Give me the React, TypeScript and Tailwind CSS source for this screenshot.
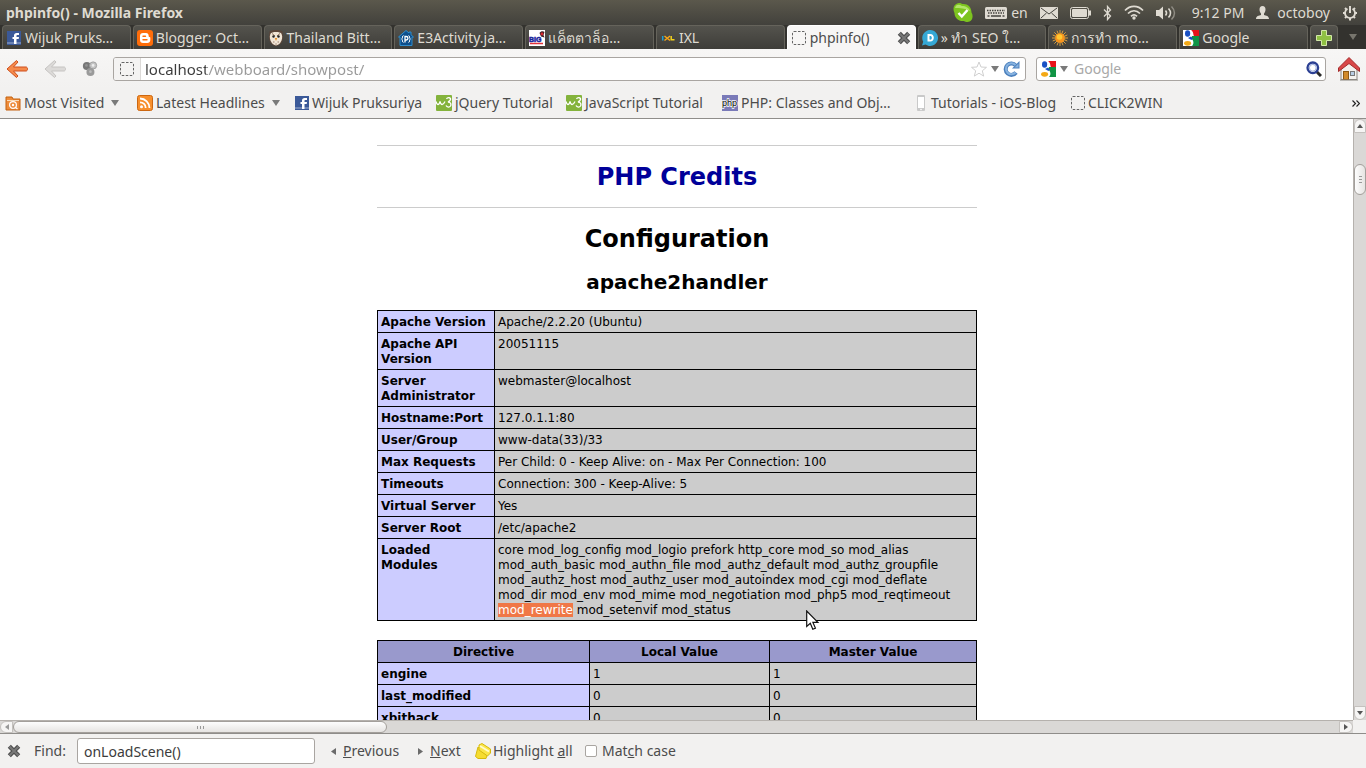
import type { ReactNode } from "react";

interface Tab {
  title: string;
  icon: ReactNode;
  active?: boolean;
}

interface Bookmark {
  title: string;
  icon: ReactNode;
  width: string;
  folder?: boolean;
}

function FacebookIcon() {
  return (
    <svg width="14" height="14" viewBox="0 0 14 14" className="shrink-0">
      <rect width="14" height="14" fill="#3b5998" />
      <rect y="11" width="14" height="2" fill="#6d84b4" />
      <path d="M7 13V8H5.5V6H7V4.6C7 3 8 2 9.600 2H12v2h-1.500c-.8 0-1 .3-1 1v1H12l-.3 2H9.500v5z" fill="#fff" />
    </svg>
  );
}

function BloggerIcon() {
  return (
    <svg width="16" height="16" viewBox="0 0 16 16" className="shrink-0">
      <rect width="16" height="16" rx="3" fill="#ff6d0a" />
      <path d="M6 3h3c1.700 0 2.700 1.200 2.700 3 0 .8.200 1 .8 1 .5 0 .8.300.8.8V10c0 1.800-1.200 3-3 3H6c-1.800 0-3-1.200-3-3V6c0-1.800 1.200-3 3-3z" fill="#fff" />
      <path d="M6 6.200h2.500M6 9.800h4" stroke="#ff6d0a" strokeWidth="1.400" strokeLinecap="round" />
    </svg>
  );
}

function OwlIcon() {
  return (
    <svg width="16" height="16" viewBox="0 0 16 16" className="shrink-0">
      <path d="M1.500 1.500c3-2 10-2 13 0l.5 5.500c0 5-2.500 8.500-7 9-4.500-.5-7-4-7-9z" fill="#5b463a" />
      <path d="M3 3c2-1.500 8-1.500 10 0 1.500 2 1.500 5 .5 7.500-1 2.500-2.500 4.500-5.500 5-3-.5-4.500-2.500-5.500-5C1.500 8 1.500 5 3 3z" fill="#f0e5d6" />
      <path d="M4 3.500l3 2.500M12 3.500L9 6" stroke="#8b6d58" />
      <circle cx="5.500" cy="6.500" r="1.200" fill="#222" />
      <circle cx="10.500" cy="6.500" r="1.200" fill="#222" />
      <path d="M6.800 8h2.400L8 11z" fill="#e28a22" />
      <path d="M5 12h1.500M9.500 12H11M7.300 14h1.500" stroke="#9a7b66" />
    </svg>
  );
}

function PantipIcon() {
  return (
    <svg width="16" height="16" viewBox="0 0 16 16" className="shrink-0">
      <path d="M8 .5L.5 7H2v8.500h12V7h1.500L13 4.800V2h-2v1z" fill="#0d4f8c" stroke="#2f8ccb" />
      <path d="M5.500 5.500c-1.500 0-.5 3-2 3.500 1.500.5.500 3.500 2 3.500M10.500 5.500c1.500 0 .5 3 2 3.500-1.500.5-.5 3.500-2 3.500" stroke="#fff" fill="none" />
      <path d="M7 12.500V6.500h1.200a1.600 1.600 0 010 3.500H7" stroke="#fff" strokeWidth="1.300" fill="none" />
    </svg>
  );
}

function BigIcon() {
  return (
    <svg width="16" height="16" viewBox="0 0 16 16" className="shrink-0">
      <rect width="16" height="16" fill="#fff" />
      <path d="M10.500 3c1-2 4-2 5-1l-1 3 1 2.500-3.500-1z" fill="#432327" />
      <circle cx="13" cy="4" r="1.400" fill="#d8252c" />
      <text x="0" y="12" fontSize="7" fontWeight="bold" fontFamily="Liberation Sans, sans-serif" fill="#17259b" stroke="#17259b" strokeWidth=".5">BIG</text>
      <path d="M1 13.500h13" stroke="#e3323b" strokeWidth="1.500" />
    </svg>
  );
}

function IxlIcon() {
  return (
    <svg width="16" height="16" viewBox="0 0 16 16" className="shrink-0">
      <path d="M2.700 6v4.500" stroke="#1da0d8" strokeWidth="1.500" />
      <path d="M4.500 6l5.500 4.500M10 6l-5.500 4.500" stroke="#f5a51a" strokeWidth="1.500" />
      <path d="M11.200 6v3.800H14.500" stroke="#f2d21c" strokeWidth="1.500" fill="none" />
    </svg>
  );
}

function BlankPageIcon() {
  return (
    <svg width="14" height="14" viewBox="0 0 14 14" className="shrink-0">
      <rect x=".5" y=".5" width="13" height="13" rx="1.500" fill="none" stroke="#666" strokeDasharray="2.500 1.500" />
    </svg>
  );
}

function DisqusIcon() {
  return (
    <svg width="16" height="16" viewBox="0 0 16 16" className="shrink-0">
      <path d="M8 0a8 8 0 11-4.500 14.600L0 15.500l1.200-3.700A8 8 0 018 0z" fill="#35a8d5" />
      <path d="M5.500 4h2.700c2.300 0 3.600 1.500 3.600 3.800s-1.300 3.700-3.600 3.700H5.500zM7.500 6v3.600c1.700.2 2.300-.4 2.300-1.800S9.200 5.900 7.500 6z" fill="#fff" />
    </svg>
  );
}

function SunIcon() {
  return (
    <svg width="16" height="16" viewBox="0 0 16 16" className="shrink-0">
      <path d="M8 0v16M0 8h16M2.300 2.300l11.400 11.400M13.700 2.300L2.300 13.700M5 .7l6 14.600M11 .7L5 15.300M.7 5l14.600 6M.7 11l14.600-6" stroke="#d9a040" />
      <circle cx="8" cy="8" r="4.800" fill="#f7941d" />
      <circle cx="7.500" cy="7" r="2.800" fill="#ffc832" />
    </svg>
  );
}

function GoogleIcon() {
  return (
    <svg width="16" height="16" viewBox="0 0 16 16" className="shrink-0">
      <rect width="16" height="16" fill="#fff" />
      <path d="M8 0h8v6h-5C10 5 11 2 8 0z" fill="#e8141a" />
      <path d="M9 6h7v10H9c2-2 2-5-.5-7.500z" fill="#109445" />
      <ellipse cx="4.600" cy="3.500" rx="2.600" ry="3.200" fill="#1950c4" />
      <path d="M5 8l3-1.500 2 2L8.500 10z" fill="#1950c4" />
      <ellipse cx="4.600" cy="13.300" rx="3.500" ry="2.400" fill="#f3a916" />
    </svg>
  );
}

function W3Icon() {
  return (
    <svg width="16" height="16" viewBox="0 0 16 16" className="shrink-0">
      <rect width="16" height="16" rx="1" fill="#84b33c" />
      <path d="M0 6.500c1 4 3 4 4 0 1 4 3 4 5 0" stroke="#fff" strokeWidth="1.300" fill="none" />
      <path d="M10.500 4c1-2 4.500-1.500 4 .5-.3 1.500-1.500 2-2.500 2.500 2.500 0 3.500 2 2.500 4-1 1.500-3.500 1.500-4.500-.5" stroke="#fff" strokeWidth="1.300" fill="none" />
    </svg>
  );
}

function PhpIcon() {
  return (
    <svg width="16" height="16" viewBox="0 0 16 16" className="shrink-0">
      <rect width="16" height="16" fill="#7a7ab8" />
      <text x="0" y="11" fontSize="9" fontFamily="Liberation Sans, sans-serif" fill="#000" stroke="#fff" strokeWidth="1.500" paintOrder="stroke">php</text>
    </svg>
  );
}

function FolderFeedIcon() {
  return (
    <svg width="16" height="16" viewBox="0 0 16 16" className="shrink-0">
      <path d="M1 15V2h6l1 2h7v11z" fill="#ee8c3a" stroke="#c4610f" />
      <path d="M2 5.500h12" stroke="#fbdcb8" />
      <circle cx="8" cy="10" r="3.400" fill="none" stroke="#fff" strokeWidth="1.200" />
      <circle cx="8" cy="10" r="1.200" fill="#fff" />
      <path d="M10.500 12.500L12.500 14" stroke="#fff" strokeWidth="1.300" />
    </svg>
  );
}

function FeedIcon() {
  return (
    <svg width="16" height="16" viewBox="0 0 16 16" className="shrink-0">
      <rect x=".5" y=".5" width="15" height="15" rx="2" fill="#f78f2c" stroke="#cc6711" />
      <circle cx="4.500" cy="11.700" r="1.500" fill="#fff" />
      <path d="M3 7.300c3.300 0 5.700 2.400 5.700 5.700M3 3.500c5.300 0 9.500 4.200 9.500 9.500" stroke="#fff" strokeWidth="1.800" fill="none" />
    </svg>
  );
}

function PhoneIcon() {
  return (
    <svg width="14" height="16" viewBox="0 0 14 16" className="shrink-0">
      <rect x="3" width="8" height="16" rx="1" fill="#c9c9c9" />
      <rect x="4" y="2" width="6" height="11" fill="#fff" />
      <circle cx="7" cy="14.500" r=".8" fill="#fff" />
    </svg>
  );
}

function DownArrow({ color = "#7a7a7a" }: { color?: string }) {
  return (
    <svg width="8" height="6" viewBox="0 0 8 6" className="shrink-0">
      <path d="M0 0h8L4 6z" fill={color} />
    </svg>
  );
}

function CloseIcon() {
  return (
    <svg width="14" height="14" viewBox="0 0 14 14">
      <path d="M2.300 2.300l9.400 9.400M11.700 2.300l-9.400 9.400" stroke="#4e4e4e" strokeWidth="4.400" />
      <path d="M2.500 2.500l9 9M11.500 2.500l-9 9" stroke="#787878" strokeWidth="2" />
    </svg>
  );
}

function ArrowIcon({ fill, stroke }: { fill: string; stroke: string }) {
  return (
    <svg width="22" height="20" viewBox="0 0 22 20">
      <path d="M10.500 1.500L1 10l9.500 8.500 1.500-1.500-4.500-5H20c2 0 2-4 0-4H7.500l4.500-5z" fill={fill} stroke={stroke} strokeLinejoin="round" />
    </svg>
  );
}

const TABS: Tab[] = [
  { title: "Wijuk Pruks…", icon: <FacebookIcon /> },
  { title: "Blogger: Oct…", icon: <BloggerIcon /> },
  { title: "Thailand Bitt…", icon: <OwlIcon /> },
  { title: "E3Activity.ja…", icon: <PantipIcon /> },
  { title: "แค็ตตาล็อ…", icon: <BigIcon /> },
  { title: "IXL", icon: <IxlIcon /> },
  { title: "phpinfo()", icon: <BlankPageIcon />, active: true },
  { title: "» ทำ SEO ใ…", icon: <DisqusIcon /> },
  { title: "การทำ mo…", icon: <SunIcon /> },
  { title: "Google", icon: <GoogleIcon /> },
];

const BOOKMARKS: Bookmark[] = [
  { title: "Most Visited", icon: <FolderFeedIcon />, width: "w-[132px]", folder: true },
  { title: "Latest Headlines", icon: <FeedIcon />, width: "w-[158px]", folder: true },
  { title: "Wijuk Pruksuriya", icon: <FacebookIcon />, width: "w-[141px]" },
  { title: "jQuery Tutorial", icon: <W3Icon />, width: "w-[130px]" },
  { title: "JavaScript Tutorial", icon: <W3Icon />, width: "w-[156px]" },
  { title: "PHP: Classes and Obj…", icon: <PhpIcon />, width: "w-[192px]" },
  { title: "Tutorials - iOS-Blog", icon: <PhoneIcon />, width: "w-[157px]" },
  { title: "CLICK2WIN", icon: <BlankPageIcon />, width: "w-[110px]" },
];

const APACHE_INFO: [string, string][] = [
  ["Apache Version", "Apache/2.2.20 (Ubuntu)"],
  ["Apache API Version", "20051115"],
  ["Server Administrator", "webmaster@localhost"],
  ["Hostname:Port", "127.0.1.1:80"],
  ["User/Group", "www-data(33)/33"],
  ["Max Requests", "Per Child: 0 - Keep Alive: on - Max Per Connection: 100"],
  ["Timeouts", "Connection: 300 - Keep-Alive: 5"],
  ["Virtual Server", "Yes"],
  ["Server Root", "/etc/apache2"],
];

const DIRECTIVES: [string, string, string][] = [
  ["engine", "1", "1"],
  ["last_modified", "0", "0"],
  ["xbithack", "0", "0"],
];

function SystemPanel() {
  return (
    <header className="flex h-[25px] shrink-0 items-center justify-between bg-linear-to-b from-[#5b584c] to-[#42413c] pr-2 pl-1.5 text-[#dfdbd2]">
      <h1 className="text-sm font-bold">phpinfo() - Mozilla Firefox</h1>
      <div className="flex items-center gap-3">
        <svg width="20" height="20" viewBox="0 0 20 20">
          <path d="M6 0c1.500 0 2.500.5 3.500 1 5-.5 9 3 9 8.500 2.500 4 .5 9.500-4 9.500-1.500 0-2.500-.3-3.500-1C5.500 18.500 1.500 15 1.500 10-1 5 1.500.5 6 0z" fill="#7dc41f" />
          <path d="M2 5c1-4 4-4 7-2 4 0 7 2 8 5-5-3-10-3-15-3z" fill="#b2e36a" />
          <path d="M5.500 10l3.300 3.500L14.500 7" stroke="#fff" strokeWidth="2.500" fill="none" />
        </svg>
        <div className="flex items-center gap-1">
          <svg width="22" height="12" viewBox="0 0 22 12">
            <rect width="22" height="12" rx="1.500" fill="#dfdbd2" />
            <path d="M2 3.500h18M3 6h16" stroke="#45443f" strokeWidth="1.500" strokeDasharray="1.500 1" />
            <path d="M2.500 9h2M6 9h10M17.500 9h2" stroke="#45443f" strokeWidth="1.500" />
          </svg>
          <span className="text-sm">en</span>
        </div>
        <svg width="18" height="12" viewBox="0 0 18 12">
          <rect width="18" height="12" rx="1" fill="#dfdbd2" />
          <path d="M1 1l8 6 8-6M1 11l5.500-5M17 11l-5.500-5" stroke="#45443f" fill="none" />
        </svg>
        <svg width="21" height="12" viewBox="0 0 21 12">
          <rect x=".5" y=".5" width="18" height="11" rx="2" fill="none" stroke="#dfdbd2" />
          <rect x="2" y="2" width="15" height="8" rx="1" fill="#dfdbd2" />
          <rect x="19" y="3.500" width="2" height="5" fill="#dfdbd2" />
        </svg>
        <svg width="9" height="16" viewBox="0 0 9 16">
          <path d="M1 4.500l6.500 6.500L4.500 14.500v-13L7.500 5 1 11.500" stroke="#dfdbd2" strokeWidth="1.300" fill="none" />
        </svg>
        <svg width="20" height="15" viewBox="0 0 20 15">
          <path d="M1 5.500c5-5.500 13-5.500 18 0M4 8.500c3.500-3.700 8.500-3.700 12 0M7 11.300c2-2 4-2 6 0" stroke="#dfdbd2" strokeWidth="1.700" fill="none" />
          <circle cx="10" cy="13" r="1.700" fill="#dfdbd2" />
        </svg>
        <svg width="20" height="16" viewBox="0 0 20 16">
          <path d="M0 5h3l4-3.500v13L3 11H0z" fill="#dfdbd2" />
          <path d="M9.500 5.500c1.300 1.500 1.300 3.500 0 5M12.500 3.500c2.700 3 2.700 6 0 9" stroke="#dfdbd2" strokeWidth="1.500" fill="none" />
          <path d="M15.500 1.500c4 4 4 9 0 13" stroke="#8f8c83" strokeWidth="1.500" fill="none" />
        </svg>
        <time className="ml-1 text-sm">9:12 PM</time>
        <div className="flex items-center gap-2">
          <svg width="13" height="13" viewBox="0 0 13 13">
            <path d="M6.500 0c2 0 3 1.500 3 3.500S8.500 7 8 7.500V9c2 .5 5 1 5 4H0c0-3 3-3.500 5-4V7.500C4.500 7 3.500 5.500 3.500 3.500S4.500 0 6.500 0z" fill="#dfdbd2" />
          </svg>
          <span className="text-sm">octoboy</span>
        </div>
        <svg width="16" height="16" viewBox="0 0 16 16">
          <path d="M5.500 3.700a5 5 0 105 0" stroke="#dfdbd2" strokeWidth="1.800" fill="none" />
          <path d="M8 1v7M1 8h2M13 8h2M3 3l1.300 1.300M13 3l-1.300 1.300M3 13l1.300-1.300M13 13l-1.300-1.300M8 13v2.500" stroke="#dfdbd2" strokeWidth="2" />
        </svg>
      </div>
    </header>
  );
}

function TabStrip() {
  return (
    <nav className="flex h-6 shrink-0 gap-0.5 bg-[#33322e] pl-0.5" aria-label="Tabs">
      {TABS.map((tab) =>
        tab.active ? (
          <div
            key={tab.title}
            className="flex max-w-[129px] min-w-0 flex-1 items-center rounded-t border border-b-0 border-white bg-[#f7f6f5] pr-1 pl-[3px] text-sm text-[#4c4c4c]"
          >
            <button type="button" className="flex flex-1 items-center gap-[3px]">
              <span className="flex size-4 shrink-0 items-center justify-center">{tab.icon}</span>
              {tab.title}
            </button>
            <button type="button" aria-label="Close tab">
              <CloseIcon />
            </button>
          </div>
        ) : (
          <button
            key={tab.title}
            type="button"
            className="flex max-w-[129px] min-w-0 flex-1 items-center gap-[3px] overflow-hidden rounded-t border border-b-0 border-[#65635b] bg-linear-to-b from-[#54534d] to-[#3e3d39] pl-[3px] text-sm whitespace-nowrap text-[#dfdbd2]"
          >
            <span className="flex size-4 shrink-0 items-center justify-center">{tab.icon}</span>
            {tab.title}
          </button>
        ),
      )}
      <button
        type="button"
        aria-label="New tab"
        className="flex w-7 items-center justify-center rounded-t border border-b-0 border-[#65635b] bg-linear-to-b from-[#54534d] to-[#3e3d39]"
      >
        <svg width="16" height="16" viewBox="0 0 16 16">
          <path d="M5.500.5h5v5h5v5h-5v5h-5v-5h-5v-5h5z" fill="#8fc043" stroke="#d2e8a8" />
        </svg>
      </button>
      <button type="button" aria-label="List all tabs" className="flex w-[26px] items-center justify-center">
        <DownArrow color="#77756d" />
      </button>
    </nav>
  );
}

function NavigationBar() {
  return (
    <div className="flex h-[39px] shrink-0 items-center bg-linear-to-b from-[#f7f6f5] to-[#f2f1f0] pr-1.5 pl-1.5">
      <div className="flex w-[107px] items-center gap-4">
        <button type="button" aria-label="Back">
          <ArrowIcon fill="#f58a4b" stroke="#cf4f1c" />
        </button>
        <button type="button" aria-label="Forward">
          <ArrowIcon fill="#dcdad8" stroke="#c6c4c2" />
        </button>
        <svg width="16" height="16" viewBox="0 0 18 18">
          <circle cx="5.500" cy="5.500" r="4.500" fill="#777" />
          <circle cx="12.500" cy="5" r="4" fill="#c4c4c4" stroke="#999" />
          <circle cx="9.500" cy="12.500" r="4.500" fill="#9a9a9a" />
          <circle cx="5" cy="5" r="1.500" fill="#939393" />
          <circle cx="12.500" cy="5" r="1.500" fill="#eee" />
          <circle cx="9.500" cy="12" r="1.500" fill="#bbb" />
        </svg>
      </div>
      <div className="flex h-6 flex-1 items-center overflow-hidden rounded-[3px] border border-[#a9a5a1] bg-white">
        <div className="flex h-full w-[27px] items-center justify-center border-r border-[#dcdad8] bg-[#f4f3f2]">
          <BlankPageIcon />
        </div>
        <input
          aria-label="Location"
          defaultValue="localhost/webboard/showpost/"
          className="min-w-0 flex-1 bg-linear-to-r from-[#3c3c3c] from-[65px] to-[#999999] to-[65px] bg-clip-text pl-1 text-[15px] leading-5 text-transparent outline-none"
        />
        <div className="flex items-center gap-1 pr-1">
          <button type="button" aria-label="Bookmark this page">
            <svg width="16" height="16" viewBox="0 0 16 16">
              <path d="M8 1l2 5 5.500.3-4.200 3.500 1.400 5.300L8 12.200l-4.700 2.900 1.400-5.300L.5 6.300 6 6z" fill="#fff" stroke="#cfcfcf" />
            </svg>
          </button>
          <button type="button" aria-label="Show history">
            <DownArrow />
          </button>
          <button type="button" aria-label="Reload">
            <svg width="18" height="16" viewBox="0 0 18 16">
              <path d="M13 11.500a5.700 5.700 0 11-.3-7" stroke="#4c80bd" strokeWidth="4" fill="none" />
              <path d="M16.500 0v7.500H9z" fill="#4c80bd" />
              <path d="M12.500 11.500a5.500 5.500 0 110-7.500" stroke="#86b2e0" strokeWidth="2" fill="none" />
              <path d="M15.500 2.500v4h-4z" fill="#86b2e0" />
            </svg>
          </button>
        </div>
      </div>
      <div className="ml-2.5 flex h-6 w-[290px] items-center gap-1 rounded-[3px] border border-[#a9a5a1] bg-white px-[3px]">
        <GoogleIcon />
        <button type="button" aria-label="Choose search engine">
          <DownArrow />
        </button>
        <input
          aria-label="Search"
          placeholder="Google"
          className="min-w-0 flex-1 pl-0.5 text-sm text-[#3c3c3c] outline-none placeholder:text-[#a8a8a8]"
        />
        <button type="button" aria-label="Submit search">
          <svg width="16" height="16" viewBox="0 0 16 16">
            <path d="M10.500 10.500l4.500 4.500" stroke="#2a2a2a" strokeWidth="3" />
            <circle cx="6.800" cy="6.800" r="5.300" fill="#e8eefb" stroke="#2b3f93" strokeWidth="2.300" />
            <circle cx="6.800" cy="6.800" r="3.400" fill="#fff" stroke="#9eaedb" />
          </svg>
        </button>
      </div>
      <button type="button" aria-label="Home" className="ml-3">
        <svg width="22" height="24" viewBox="0 0 22 24">
          <path d="M3 11l8-8 8 8v11.500H3z" fill="#f4f2ee" stroke="#8a8680" />
          <path d="M11 .5L.5 11v3.500L11 6.500l10.500 8V11z" fill="#d94848" stroke="#a32a2a" strokeLinejoin="round" />
          <rect x="5.500" y="14.500" width="5" height="8" fill="#d18a2a" stroke="#8f5a12" />
          <rect x="12.500" y="14.500" width="4" height="4" fill="#b7cde4" stroke="#777" />
          <path d="M2 23h18" stroke="#8a8680" />
        </svg>
      </button>
    </div>
  );
}

function BookmarksBar() {
  return (
    <nav className="flex h-[31px] shrink-0 items-center border-b border-[#8f8d8a] bg-[#f2f1f0] pr-1.5 pl-[5px] text-sm text-[#4c4c4c]">
      {BOOKMARKS.map((b) => (
        <a key={b.title} href="#" className={`flex shrink-0 items-center gap-[3px] whitespace-nowrap ${b.width}`}>
          {b.icon}
          {b.title}
          {b.folder && (
            <span className="ml-1">
              <DownArrow />
            </span>
          )}
        </a>
      ))}
      <button type="button" aria-label="More bookmarks" className="ml-auto">
        <svg width="8" height="7" viewBox="0 0 8 7">
          <path d="M.5.500l3 3-3 3M4.500.500l3 3-3 3" stroke="#222" strokeWidth="1.200" fill="none" />
        </svg>
      </button>
    </nav>
  );
}

function PhpInfoPage() {
  return (
    <main className="mx-auto w-[600px] max-w-full pt-[26px] text-xs leading-[15px] text-black [font-family:'DejaVu_Sans',sans-serif]">
      <hr className="border-[#cccccc]" />
      <h1 className="mt-[17px] mb-4 text-center text-2xl leading-7 font-bold text-[#000099]">
        <a href="#">PHP Credits</a>
      </h1>
      <hr className="border-[#cccccc]" />
      <h1 className="mt-[17px] mb-[15px] text-center text-2xl leading-7 font-bold">Configuration</h1>
      <h2 className="mb-3.5 text-center text-xl leading-7 font-bold">apache2handler</h2>

      <table className="w-full table-fixed border-collapse">
        <colgroup>
          <col className="w-[117px]" />
          <col />
        </colgroup>
        <tbody>
          {APACHE_INFO.map(([name, value]) => (
            <tr key={name}>
              <th scope="row" className="border border-black bg-[#ccccff] px-[3px] pt-1 pb-0.5 text-left align-top">
                {name}
              </th>
              <td className="border border-black bg-[#cccccc] px-[3px] pt-1 pb-0.5 align-top">{value}</td>
            </tr>
          ))}
          <tr>
            <th scope="row" className="border border-black bg-[#ccccff] px-[3px] pt-1 pb-0.5 text-left align-top">
              Loaded Modules
            </th>
            <td className="border border-black bg-[#cccccc] px-[3px] pt-1 pb-0.5 align-top">
              core mod_log_config mod_logio prefork http_core mod_so mod_alias mod_auth_basic mod_authn_file
              mod_authz_default mod_authz_groupfile mod_authz_host mod_authz_user mod_autoindex mod_cgi
              mod_deflate mod_dir mod_env mod_mime mod_negotiation mod_php5 mod_reqtimeout{" "}
              <mark className="bg-[#f07746] text-white">mod_rewrite</mark> mod_setenvif mod_status
            </td>
          </tr>
        </tbody>
      </table>

      <table className="mt-[19px] w-full table-fixed border-collapse">
        <colgroup>
          <col className="w-[212px]" />
          <col className="w-[180px]" />
          <col />
        </colgroup>
        <thead>
          <tr className="bg-[#9999cc]">
            <th scope="col" className="border border-black px-[3px] pt-1 pb-0.5">Directive</th>
            <th scope="col" className="border border-black px-[3px] pt-1 pb-0.5">Local Value</th>
            <th scope="col" className="border border-black px-[3px] pt-1 pb-0.5">Master Value</th>
          </tr>
        </thead>
        <tbody>
          {DIRECTIVES.map(([name, local, master]) => (
            <tr key={name}>
              <th scope="row" className="border border-black bg-[#ccccff] px-[3px] pt-1 pb-0.5 text-left">{name}</th>
              <td className="border border-black bg-[#cccccc] px-[3px] pt-1 pb-0.5">{local}</td>
              <td className="border border-black bg-[#cccccc] px-[3px] pt-1 pb-0.5">{master}</td>
            </tr>
          ))}
        </tbody>
      </table>
    </main>
  );
}

function VerticalScrollbar() {
  return (
    <div className="flex w-[13px] shrink-0 flex-col border-l border-[#b5b1ad] bg-[#dad8d6]">
      <button type="button" aria-label="Scroll up" className="flex h-[14px] items-center justify-center rounded-t-full border border-[#c4c1be] bg-[#f6f5f4]">
        <svg width="6" height="4" viewBox="0 0 6 4">
          <path d="M0 4h6L3 0z" fill="#555" />
        </svg>
      </button>
      <div className="flex-1 pt-[31px]">
        <div className="flex h-[31px] flex-col items-center justify-center gap-0.5 rounded-full border border-[#a39f9b] bg-linear-to-r from-[#fdfdfd] to-[#e6e4e2]">
          <span className="h-px w-[3px] bg-[#999]" />
          <span className="h-px w-[3px] bg-[#999]" />
          <span className="h-px w-[3px] bg-[#999]" />
        </div>
      </div>
      <button type="button" aria-label="Scroll down" className="flex h-[14px] items-center justify-center rounded-b-full border border-[#c4c1be] bg-[#f6f5f4]">
        <svg width="6" height="4" viewBox="0 0 6 4">
          <path d="M0 0h6L3 4z" fill="#555" />
        </svg>
      </button>
    </div>
  );
}

function HorizontalScrollbar() {
  return (
    <div className="flex h-[13px] shrink-0 bg-[#f2f1f0] pr-[13px]">
      <div className="flex flex-1 border-t border-[#b5b1ad] bg-[#dad8d6]">
        <button type="button" aria-label="Scroll left" className="flex w-[13px] items-center justify-center rounded-l-full border border-[#c4c1be] bg-[#f6f5f4]">
          <svg width="4" height="6" viewBox="0 0 4 6">
            <path d="M4 0v6L0 3z" fill="#999" />
          </svg>
        </button>
        <div className="flex-1">
          <div className="flex h-full w-[374px] max-w-full items-center justify-center gap-0.5 rounded-full border border-[#a39f9b] bg-linear-to-b from-[#fdfdfd] to-[#e6e4e2]">
            <span className="h-[3px] w-px bg-[#999]" />
            <span className="h-[3px] w-px bg-[#999]" />
            <span className="h-[3px] w-px bg-[#999]" />
          </div>
        </div>
        <button type="button" aria-label="Scroll right" className="flex w-[14px] items-center justify-center rounded-r-full border border-[#c4c1be] bg-[#f6f5f4]">
          <svg width="4" height="6" viewBox="0 0 4 6">
            <path d="M0 0v6l4-3z" fill="#555" />
          </svg>
        </button>
      </div>
    </div>
  );
}

function FindBar() {
  return (
    <footer className="flex h-[35px] shrink-0 items-center border-t border-[#8f8d8a] bg-[#f2f1f0] pl-[7px] text-sm text-[#4c4c4c]">
      <button type="button" aria-label="Close find bar" className="mr-[13px]">
        <CloseIcon />
      </button>
      <label htmlFor="find" className="w-[43px]">
        Find:
      </label>
      <input
        id="find"
        defaultValue="onLoadScene()"
        className="h-[26px] w-[238px] rounded-[3px] border border-[#a9a5a1] bg-white px-1.5 text-[#3c3c3c] outline-none"
      />
      <button type="button" className="ml-4 flex w-[87px] items-center gap-[7px]">
        <svg width="5" height="7" viewBox="0 0 5 7">
          <path d="M5 0v7L0 3.500z" fill="#6b6b6b" />
        </svg>
        <span><u>P</u>revious</span>
      </button>
      <button type="button" className="flex w-[57px] items-center gap-[7px]">
        <svg width="5" height="7" viewBox="0 0 5 7">
          <path d="M0 0v7l5-3.500z" fill="#6b6b6b" />
        </svg>
        <span><u>N</u>ext</span>
      </button>
      <button type="button" className="flex w-[110px] items-center gap-0.5">
        <svg width="16" height="16" viewBox="0 0 16 16">
          <path d="M3 4L.5 13.500 3 15.500h8l1-3z" fill="#f6dc30" stroke="#d6b90d" />
          <path d="M4 2l3-1.500L15.500 6v4l-3 3L4 7z" fill="#fbe64a" stroke="#d6b90d" />
          <path d="M5 3l9 5.500" stroke="#fffbd0" strokeWidth="2" />
        </svg>
        <span>Highlight <u>a</u>ll</span>
      </button>
      <input id="match-case" type="checkbox" className="h-3 w-3 appearance-none rounded-xs border border-[#a9a5a1] bg-white" />
      <label htmlFor="match-case" className="ml-[5px]">
        Mat<u>c</u>h case
      </label>
    </footer>
  );
}

export default function App() {
  return (
    <div className="relative flex h-screen flex-col overflow-hidden bg-white [font-family:'Noto_Sans','Open_Sans',sans-serif]">
      <SystemPanel />
      <TabStrip />
      <NavigationBar />
      <BookmarksBar />
      <div className="flex min-h-0 flex-1">
        <div className="min-w-0 flex-1 overflow-hidden pl-px">
          <PhpInfoPage />
        </div>
        <VerticalScrollbar />
      </div>
      <HorizontalScrollbar />
      <FindBar />

      {/* mouse pointer */}
      <svg width="14" height="21" viewBox="0 0 14 21" className="pointer-events-none absolute top-[610px] left-[806px]">
        <path d="M.7 1v15.500l3.600-3.300 2.500 6 2.600-1.100-2.500-5.700h5z" fill="#fff" stroke="#111" strokeWidth="1.200" />
      </svg>
    </div>
  );
}
